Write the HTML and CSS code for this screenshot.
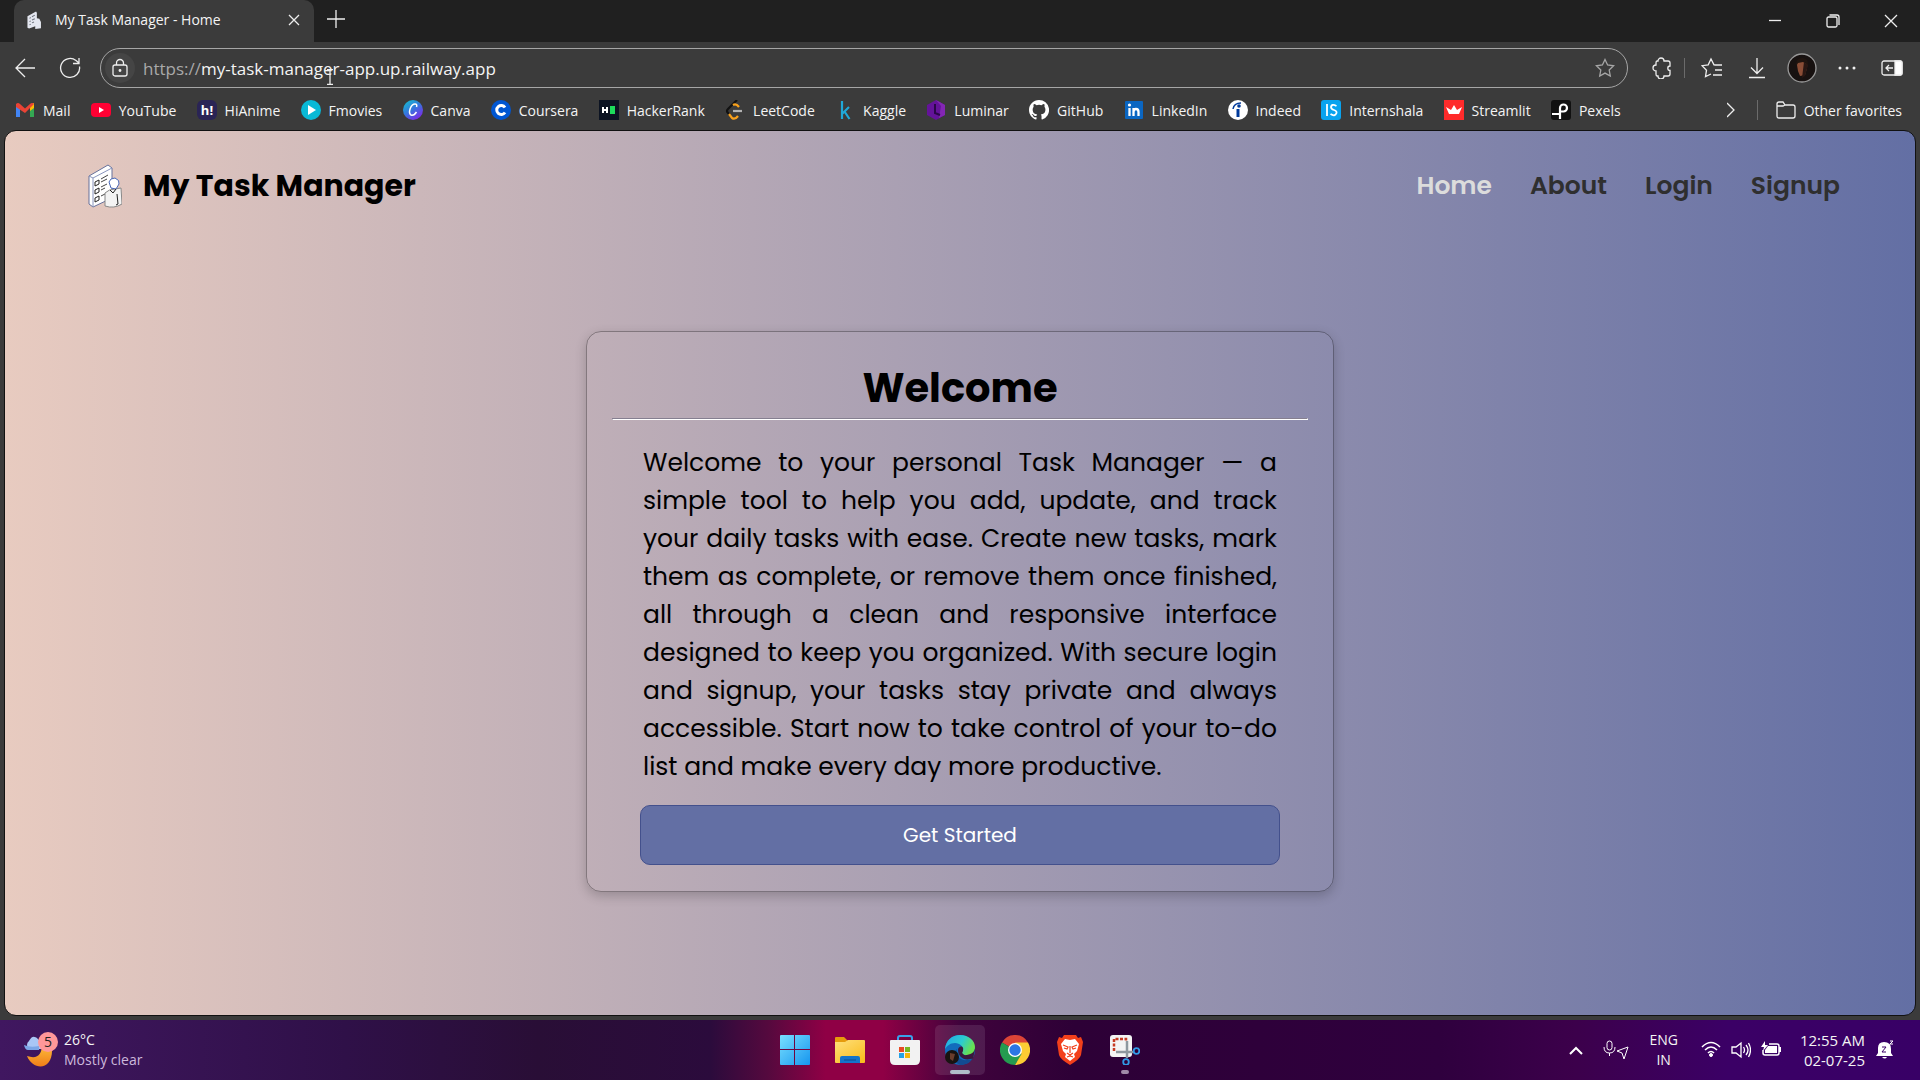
FILE: index.html
```html
<!DOCTYPE html>
<html lang="en">
<head>
<meta charset="utf-8">
<title>My Task Manager - Home</title>
<link rel="stylesheet" href="styles.css">
</head>
<body>
<div class="desktop">
<div class="browser">
  <div class="tabs">
    <div class="tab">
      <svg class="tab-icon" viewBox="0 0 34 44"><path d="M1 13 22 1l2 3v14l6 1 4 8v15l-14 2v-7L5 43l-4-2z" fill="#e4e7f0"/><path d="M6 18l3-2M6 26l3-2M6 34l3-2M12 14l7-4M12 22l7-3M12 29l5-2" stroke="#70757f" stroke-width="2.500"/></svg>
      <span class="tab-title">My Task Manager - Home</span>
      <button class="icon-btn" aria-label="Close tab"><svg width="12" height="12" viewBox="0 0 12 12"><path d="M1 1l10 10M11 1 1 11"/></svg></button>
    </div>
    <button class="icon-btn new-tab" aria-label="New tab"><svg width="18" height="18" viewBox="0 0 18 18"><path d="M9 0v18M0 9h18"/></svg></button>
    <div class="window-controls">
      <button class="icon-btn" aria-label="Minimize"><svg width="14" height="14" viewBox="0 0 14 14"><path d="M1 6.500h12"/></svg></button>
      <button class="icon-btn" aria-label="Restore"><svg width="14" height="14" viewBox="0 0 14 14"><rect x="1" y="3" width="10" height="10" rx="1.500"/><path d="M3.500 1H11q2 0 2 2v8"/></svg></button>
      <button class="icon-btn" aria-label="Close"><svg width="14" height="14" viewBox="0 0 14 14"><path d="M1 1l12 12M13 1 1 13"/></svg></button>
    </div>
  </div>
  <div class="toolbar">
    <button class="icon-btn" aria-label="Back"><svg width="20" height="20" viewBox="0 0 20 20"><path d="M20 10H1M10 1l-9 9 9 9"/></svg></button>
    <button class="icon-btn" aria-label="Refresh"><svg width="22" height="22" viewBox="0 0 22 22"><path d="M20.500 9.500A9.500 9.500 0 1 1 17 3.500L20 6M20 1v5.500h-6"/></svg></button>
    <div class="address">
      <span class="lock"><svg width="18" height="20" viewBox="0 0 18 20"><rect x="2" y="7" width="14" height="11" rx="2"/><path d="M5.500 7V5a3.500 3.500 0 0 1 7 0v2"/><circle cx="9" cy="12.500" r="0.800" fill="#eee"/></svg></span>
      <span class="url"><span class="scheme">https://</span>my-task-manager-app.up.railway.app</span>
      <svg class="cursor" width="8" height="16" viewBox="0 0 8 16"><path d="M1 .5h6M4 1v14M1 15.500h6"/></svg>
      <button class="star" aria-label="Add to favorites"><svg width="20" height="20" viewBox="0 0 20 20"><path d="M10 1.500l2.600 5.500 6 .8-4.400 4.200 1.100 6L10 15.100 4.700 18l1.100-6L1.400 7.800l6-.8z"/></svg></button>
    </div>
    <button class="icon-btn" aria-label="Extensions"><svg width="20" height="22" viewBox="0 0 20 22"><path d="M6 4a3 3 0 0 1 6 0h4q2 0 2 2v3a2.200 2.200 0 0 0 0 4.400V17q0 2-2 2h-4a3 3 0 0 1-6 0H5q-1 0-1-2v-3a3 3 0 0 1 0-6V6q0-2 1-2z"/></svg></button>
    <span class="divider"></span>
    <button class="icon-btn" aria-label="Favorites"><svg width="22" height="22" viewBox="0 0 22 22"><path d="M14 8l-1-.2L10 2 7.200 7.800 1 8.700l4.500 4.500-1 6.500L10 17M14 8h7M14 13h7M12 18h9"/></svg></button>
    <button class="icon-btn" aria-label="Downloads"><svg width="18" height="22" viewBox="0 0 18 22"><path d="M9 1v15M3 10.500l6 6 6-6M1 20.500h16"/></svg></button>
    <button class="icon-btn" aria-label="Profile"><svg width="30" height="30" viewBox="0 0 30 30"><circle cx="15" cy="15" r="14" fill="#171110" stroke="#999"/><path d="M10 12q0-5 6-5 5 0 4 8l-2 7-5 1-2-5z" fill="#8a4d36" stroke="none"/><path d="M9 13q0-9 7-8 6 1 5 7l-5-3-5 1z" fill="#201510" stroke="none"/><path d="M17 9l4 3-3 11-3 2z" fill="#291713" stroke="none"/></svg></button>
    <button class="icon-btn" aria-label="Settings and more"><svg width="18" height="4" viewBox="0 0 18 4"><g fill="#f1f1f1" stroke="none"><circle cx="2" cy="2" r="1.500"/><circle cx="9" cy="2" r="1.500"/><circle cx="16" cy="2" r="1.500"/></g></svg></button>
    <button class="icon-btn" aria-label="Sidebar"><svg width="22" height="16" viewBox="0 0 22 16"><rect x="1" y="1" width="20" height="14" rx="2"/><path d="M14 1h5q2 0 2 2v10q0 2-2 2h-5z" fill="#fff"/><path d="M12 8H5M8 5 5 8l3 3"/></svg></button>
  </div>
  <nav class="bookmarks" aria-label="Favorites">
    <div class="bookmark-list">
      <a href="#"><svg viewBox="0 0 20 20"><path d="M1 5v12h4V8z" fill="#4285f4"/><path d="M19 5v12h-4V8z" fill="#34a853"/><path d="M15 4.500l4-1.500v5l-4 3z" fill="#fbbc04"/><path d="M1 4q2-2 4 0l5 4.500L15 4q2-2 4 0l-9 9-9-6z" fill="#ea4335"/></svg>Mail</a>
      <a href="#"><svg viewBox="0 0 20 20"><rect y="3" width="20" height="14" rx="4" fill="#ff0033"/><path d="M8 7l5 3-5 3z" fill="#fff"/></svg>YouTube</a>
      <a href="#"><svg viewBox="0 0 20 20"><rect width="20" height="20" rx="6" fill="#2a2455"/><text x="10" y="15" font-size="13" font-weight="700" text-anchor="middle" fill="#fff">h!</text></svg>HiAnime</a>
      <a href="#"><svg viewBox="0 0 20 20"><circle cx="10" cy="10" r="10" fill="#09b9d6"/><path d="M7 5l8 5-8 5z" fill="#fff"/></svg>Fmovies</a>
      <a href="#"><svg viewBox="0 0 20 20"><defs><linearGradient id="canva" x2=".7" y2="1"><stop stop-color="#12c8cf"/><stop offset=".5" stop-color="#327bdc"/><stop offset="1" stop-color="#7d2ae8"/></linearGradient></defs><circle cx="10" cy="10" r="10" fill="url(#canva)"/><path d="M13.500 7q1-3-1.500-3-3 0-4.800 4.500-1.700 5 .8 6.500 3 1 5.500-3" fill="none" stroke="#fff" stroke-width="1.500"/></svg>Canva</a>
      <a href="#"><svg viewBox="0 0 20 20"><circle cx="10" cy="10" r="10" fill="#0056d2"/><path d="M14 7.500a4.500 4.500 0 1 0 0 5" fill="none" stroke="#fff" stroke-width="3"/></svg>Coursera</a>
      <a href="#"><svg viewBox="0 0 20 20"><path d="M0 0h20v20H0z" fill="#0c1322"/><path d="M4 7v6M8 7v6M4 10h4" stroke="#fff" stroke-width="2"/><path d="M11 6h5v8h-5z" fill="#1ddb5b"/></svg>HackerRank</a>
      <a href="#"><svg viewBox="0 0 20 20" fill="none" stroke-width="2.200"><path d="M12 0 3 9q-2 2 0 4l2 2" stroke="#111"/><path d="M8 5q3-2 6 2M4 14l3 4q3 2 6-2" stroke="#f9a11b"/><path d="M8 11h9" stroke="#b3b3b3"/></svg>LeetCode</a>
      <a href="#"><svg viewBox="0 0 20 20" fill="none" stroke="#20a8d8" stroke-width="2.200"><path d="M7 1v18M14 7l-7 7M9.500 11.500l5 7.500"/></svg>Kaggle</a>
      <a href="#"><svg viewBox="0 0 20 20"><path d="M10 0l9 5v10l-9 5-9-5V5z" fill="#64139a"/><path d="M10 0l9 5v10l-6 3 2-12z" fill="#8326b4"/><path d="M9 4v9l5 2" fill="none" stroke="#2b0749" stroke-width="2"/></svg>Luminar</a>
      <a href="#"><svg viewBox="0 0 16 16" fill="#fff"><path d="M8 0C3.580 0 0 3.580 0 8c0 3.540 2.290 6.530 5.470 7.590.4.070.55-.17.55-.38v-1.490c-2.010.37-2.530-.49-2.690-.94-.09-.23-.48-.94-.82-1.130-.28-.15-.68-.52-.01-.53.63-.01 1.080.58 1.230.82.72 1.210 1.870.87 2.330.66.07-.52.280-.87.510-1.070-1.780-.2-3.640-.89-3.640-3.950 0-.87.310-1.590.82-2.150-.08-.2-.36-1.020.08-2.120 0 0 .67-.21 2.200.82a7.600 7.600 0 0 1 4 0c1.530-1.040 2.200-.82 2.200-.82.440 1.100.16 1.920.08 2.120.51.56.82 1.270.82 2.150 0 3.070-1.870 3.750-3.650 3.950.29.25.54.73.54 1.480v2.200c0 .21.15.46.55.38A8 8 0 0 0 8 0z"/></svg>GitHub</a>
      <a href="#"><svg viewBox="0 0 20 20"><rect x="1" y="1" width="18" height="18" rx="1" fill="#0a66c2"/><path d="M5.500 8v8M9.500 8v8M9.500 12q0-3 2.500-3t2.500 3v4" fill="none" stroke="#fff" stroke-width="2.300"/><circle cx="5.500" cy="5" r="1.600" fill="#fff"/></svg>LinkedIn</a>
      <a href="#"><svg viewBox="0 0 20 20"><circle cx="10" cy="10" r="10" fill="#fff"/><path d="M10 9v8" stroke="#003a9b" stroke-width="3"/><circle cx="11" cy="6" r="1.800" fill="#003a9b"/><path d="M5 9q1-6 8-6" fill="none" stroke="#003a9b" stroke-width="1.500"/></svg>Indeed</a>
      <a href="#"><svg viewBox="0 0 20 20"><rect width="20" height="20" rx="3" fill="#09a3ef"/><path d="M6 4v12M15.500 6q-5-2.500-5.500 1 0 2 3 3t2.500 3q-1.500 4-6 1" fill="none" stroke="#fff" stroke-width="1.800"/></svg>Internshala</a>
      <a href="#"><svg viewBox="0 0 20 20"><path d="M0 0h20v20H0z" fill="#ff2b2b"/><path d="M2 7l5 3 3-5 3 5 5-3-3 7H5z" fill="#fff"/></svg>Streamlit</a>
      <a href="#"><svg viewBox="0 0 20 20"><rect width="20" height="20" rx="3" fill="#111"/><path d="M1 14h8M9 19V8a3.500 3.500 0 1 1 3.500 3.500H10" fill="none" stroke="#fff" stroke-width="2.200"/></svg>Pexels</a>
    </div>
    <button class="icon-btn more" aria-label="More favorites"><svg width="8" height="16" viewBox="0 0 8 16"><path d="M0 1l7 7-7 7"/></svg></button>
    <span class="divider"></span>
    <a href="#"><svg viewBox="0 0 20 20" fill="none" stroke="#eee" stroke-width="1.300"><path d="M1 6V4q0-2 2-2h4l2 3h8q2 0 2 2v9q0 2-2 2H3q-2 0-2-2zh6l2-1"/></svg>Other favorites</a>
  </nav>

  <div class="page">
    <header class="site-header">
      <a class="brand" href="#">
        <svg width="34" height="44" viewBox="0 0 34 44"><path d="M1 12 20 1l4 3v30L5 43l-4-3z" fill="#fff" stroke="#66719b"/><path d="M1 12l4 2 19-10M5 14v29" fill="none" stroke="#8995bd"/><path d="M7 18l4-2v4l-4 2zM7 26l4-2v4l-4 2zM7 34l4-2v4l-4 2z" fill="#fff" stroke="#222"/><path d="M13 15l7-4M13 18l6-3M13 23l6-3M13 26l4-2M13 32l4-2" stroke="#444"/><path d="M17 29q4-4 10-4l6-1 1 16q-8 5-17 2z" fill="#f3f3f3" stroke="#888"/><path d="M21 18q1-4 6-4 5 2 4 6l-3 5-5-1z" fill="#fff" stroke="#4967b5"/><path d="M22 26l3 3 3-4M29 30l1 10-2 1" fill="none" stroke="#222"/></svg>
        <span>My Task Manager</span>
      </a>
      <nav class="site-nav">
        <a class="active" href="#">Home</a>
        <a href="#">About</a>
        <a href="#">Login</a>
        <a href="#">Signup</a>
      </nav>
    </header>
    <main class="stage">
      <section class="card">
        <h1>Welcome</h1>
        <hr>
        <p>Welcome to your personal Task Manager — a simple tool to help you add, update, and track your daily tasks with ease. Create new tasks, mark them as complete, or remove them once finished, all through a clean and responsive interface designed to keep you organized. With secure login and signup, your tasks stay private and always accessible. Start now to take control of your to-do list and make every day more productive.</p>
        <button class="cta">Get Started</button>
      </section>
    </main>
  </div>
</div>

<footer class="taskbar">
  <div class="weather">
    <svg width="36" height="36" viewBox="0 0 36 36"><defs><linearGradient id="moon" x2="0" y2="1"><stop stop-color="#ffc13d"/><stop offset="1" stop-color="#ef7d18"/></linearGradient></defs><path d="M3 24q15 5 15-12l10 5c1 22-19 22-25 7z" fill="url(#moon)"/><path d="M5 17a5 5 0 0 1 0-8q4-8 10-1 6 3 3 9z" fill="#a9c6f5"/><path d="M0 13q6 3 15 1v4H4q-3 0-4-5z" fill="#7ca5e6"/><circle cx="24" cy="10" r="10" fill="#ff9799"/><text x="24" y="15" font-size="14" text-anchor="middle" fill="#222">5</text></svg>
    <div class="stack"><span>26°C</span><span class="dim">Mostly clear</span></div>
  </div>
  <div class="apps">
    <button aria-label="Start"><svg viewBox="0 0 30 30"><defs><linearGradient id="win" x2="1" y2="1"><stop stop-color="#79e0ff"/><stop offset="1" stop-color="#1695ee"/></linearGradient></defs><path d="M0 1q0-1 1-1h13v14H0zM15 0h14q1 0 1 1v13H15zM0 15h14v15H1q-1 0-1-1zM15 15h15v14q0 1-1 1H15z" fill="url(#win)"/></svg></button>
    <button aria-label="File Explorer"><svg viewBox="0 0 30 30"><defs><linearGradient id="folder" x2=".8" y2="1"><stop stop-color="#ffe07b"/><stop offset="1" stop-color="#f9bd20"/></linearGradient></defs><path d="M0 3q0-1 1-1h8l4 4v6H0z" fill="#e69b0c"/><path d="M0 7h10l3-2h16q1 0 1 1v21q0 1-1 1H1q-1 0-1-1z" fill="url(#folder)"/><path d="M5 28v-5q0-2 2-2h16q2 0 2 2v5z" fill="#1474ca"/><path d="M9 25h12" stroke="#0c4b8f"/></svg></button>
    <button aria-label="Microsoft Store"><svg viewBox="0 0 30 30"><path d="M8 8V3q0-2 2-2h10q2 0 2 2v5" fill="none" stroke="#39a1eb" stroke-width="2"/><path d="M0 6q0-1 1-1h28q1 0 1 1v19q0 5-5 5H5q-5 0-5-5z" fill="#f2f2f2"/><path d="M9 12h5v5H9z" fill="#e84b25"/><path d="M15 12h5v5h-5z" fill="#78b921"/><path d="M9 18h5v5H9z" fill="#25a2e6"/><path d="M15 18h5v5h-5z" fill="#f6b60b"/></svg></button>
    <button class="current" aria-label="Microsoft Edge"><svg viewBox="0 0 30 30"><defs><linearGradient id="edge" x2="1" y2=".4"><stop stop-color="#21a7e8"/><stop offset=".6" stop-color="#2ccbd0"/><stop offset="1" stop-color="#68e052"/></linearGradient></defs><circle cx="15" cy="15" r="15" fill="#126cbc"/><path d="M15 15l15-1-2 10-6-2z" fill="#3a183d"/><path d="M0 14C1 5 7 0 15 0c9 0 15 6 15 12 0 6-5 8-10 8-3 0-4-2-2-4 1-4-3-8-8-8-5 0-8 3-10 6z" fill="url(#edge)"/><path d="M12 14c-2 7 4 12 10 11 3 0 5-1 6-2-3 5-7 7-13 7-7-2-8-13-3-16z" fill="#124b91"/><path d="M13 15c0-3 4-5 5-2 1 2-2 4 0 6 4 3 8 2 10 1l0 3c-8 4-15-1-15-8z" fill="#3a183d"/><circle cx="7" cy="22" r="7" fill="#181311"/><path d="M5 18l5 1-2 7-3-2z" fill="#693d2c"/></svg></button>
    <button aria-label="Google Chrome"><svg viewBox="0 0 30 30"><path d="M15 15 2 7.500A15 15 0 0 1 28 7.500z" fill="#db4437"/><path d="M15 15 2 7.500A15 15 0 0 0 15 30l7-11z" fill="#249b50"/><path d="M28 7.500A15 15 0 0 1 15 30l6.500-11-6.500-11.500z" fill="#fccc33"/><circle cx="15" cy="15" r="7" fill="#fff"/><circle cx="15" cy="15" r="5.700" fill="#2b76e5"/></svg></button>
    <button aria-label="Brave"><svg viewBox="0 0 30 30"><path d="M9 0h12l2 3 3-1 2 5-2 13q-1 4-11 10Q5 24 4 20L2 7l2-5 3 1z" fill="#f2401b"/><path d="M10 4l5 1 5-1 4 5-2 7-3 3 1 3-5 4-5-4 1-3-3-3-2-7z" fill="#fff"/><path d="M8 10l5 2-1 2-3-1M22 10l-5 2 1 2 3-1M15 11v7M12 18l3 2 3-2M12 22l3-1 3 1" fill="none" stroke="#f2401b" stroke-width="1.200"/></svg></button>
    <button class="open" aria-label="Snipping Tool"><svg viewBox="0 0 30 30"><rect width="22" height="22" rx="3" fill="#f4f4f4"/><path d="M4 16V4h12v3" fill="none" stroke="#c63b23" stroke-width="2.500" stroke-dasharray="3 1.500"/><path d="M17 6v17M6 17h18" stroke="#8e989f" stroke-width="2.500"/><g fill="none" stroke="#319be7" stroke-width="1.800"><circle cx="26.500" cy="16" r="2.800"/><circle cx="16" cy="27" r="2.800"/></g></svg></button>
  </div>
  <div class="tray">
    <svg class="up" width="14" height="9" viewBox="0 0 14 9"><path d="M1 8l6-6 6 6" stroke-width="2"/></svg>
    <svg class="mic" width="26" height="20" viewBox="0 0 26 20"><rect x="4" y="1" width="5" height="9" rx="2.500"/><path d="M1 7q0 6 5.500 6T12 7M6.500 13v3M25 7l-11 4 5 2 2 6z"/></svg>
    <div class="stack lang"><span>ENG</span><span>IN</span></div>
    <div class="status">
      <svg width="20" height="16" viewBox="0 0 20 16"><path d="M1 6q9-9 18 0M4 9q6-6 12 0M7 12q3-3 6 0" stroke-width="1.600"/><circle cx="10" cy="14" r="1.500" fill="#fff"/></svg>
      <svg width="20" height="18" viewBox="0 0 20 18"><path d="M1 6h4l5-4v14l-5-4H1zM12.500 6q2 3 0 6M15 4q4 5 0 10M17.500 2q4 7 0 14" stroke-width="1.300"/></svg>
      <svg width="20" height="16" viewBox="0 0 20 16"><path d="M8 3h8q2 0 2 2v7q0 2-2 2H4q-2 0-2-2V9" stroke-width="1.500"/><path d="M7 5h9v7H4V9zM4 0 0 6h3L2 10l5-6H4zM18 6h2v5h-2z" fill="#fff" stroke="none"/></svg>
    </div>
    <div class="stack clock"><span>12:55 AM</span><span>02-07-25</span></div>
    <svg class="bell" width="18" height="20" viewBox="0 0 18 20"><path d="M0 16l2-3V8q0-6 6-6 7 0 7 7v4l2 3zM6 17h5q-2 3-5 0z" fill="#fff" stroke="none"/><path d="M6 7h4l-4 5h4" stroke="#3b0068"/><path d="M11 5h3l-3 4h3M14 1h3l-3 3h3"/></svg>
  </div>
</footer>
</div>
</body>
</html>
```
FILE: styles.css
```css
* { box-sizing: border-box; }

body {
  margin: 0;
  font-family: "Segoe UI", "Open Sans", "Noto Sans", sans-serif;
  font-size: 14px;
  color: #f4f4f4;
}

a { color: inherit; text-decoration: none; }

button {
  margin: 0;
  padding: 0;
  border: 0;
  background: none;
  color: inherit;
  font: inherit;
}

svg { display: block; flex: none; }

.desktop {
  display: flex;
  flex-direction: column;
  min-height: 100vh;
}

/* Browser window */
.browser {
  flex: 1;
  display: flex;
  flex-direction: column;
  background: #3b3b3b;
}

.icon-btn {
  display: grid;
  place-items: center;
  flex: none;
}

.icon-btn svg,
.lock svg,
.star svg,
.cursor {
  fill: none;
  stroke: #eee;
  stroke-width: 1.3;
}

.tabs {
  display: flex;
  align-items: center;
  height: 42px;
  padding-left: 14px;
  background: #202020;
}

.tab {
  display: flex;
  align-items: center;
  gap: 13px;
  width: 300px;
  height: 42px;
  padding: 0 14px 3px 12px;
  border-radius: 10px 10px 0 0;
  background: #3b3b3b;
}

.tab-icon { width: 16px; height: 18px; }
.tab-title { flex: 1; }
.new-tab { width: 44px; padding-bottom: 4px; }

.window-controls {
  display: flex;
  gap: 44px;
  margin-left: auto;
  padding-right: 22px;
}

.toolbar {
  display: flex;
  align-items: center;
  padding: 6px 6px 4px 2px;
}

.toolbar .icon-btn { width: 45px; }
.toolbar .divider { margin-right: 4px; }

.address {
  position: relative;
  flex: 1;
  display: flex;
  align-items: center;
  height: 40px;
  margin: 0 11px 0 8px;
  padding: 0 12px 0 4px;
  border: 1px solid #a6a6a6;
  border-radius: 20px;
}

.lock {
  display: grid;
  place-items: center;
  width: 30px;
  height: 30px;
  border-radius: 50%;
  background: #454545;
}

.url { margin-left: 8px; font-size: 17px; }
.scheme { color: #a9a9a9; }
.cursor { position: absolute; left: 225px; top: 20px; }
.star { margin-left: auto; }
.star svg { stroke: #a6a6a6; }

.divider { width: 1px; height: 20px; background: #6b6b6b; }

.bookmarks {
  display: flex;
  align-items: center;
  height: 38px;
  padding: 0 18px 2px 15px;
}

.bookmarks a {
  display: flex;
  align-items: center;
  gap: 8px;
  white-space: nowrap;
}

.bookmarks a svg { width: 20px; height: 20px; }

.bookmark-list {
  flex: 1;
  display: flex;
  justify-content: space-between;
}

.bookmarks .more { margin: 0 22px 0 106px; }
.bookmarks .divider { margin-right: 18px; }

/* Web page */
.page {
  flex: 1;
  display: flex;
  flex-direction: column;
  margin: 0 4px 4px;
  border: 1px solid #111;
  border-radius: 12px;
  background: linear-gradient(to right, #e8cbc0, #636fa4);
  color: #000;
  font-family: "Poppins", "Inter", sans-serif;
}

.site-header {
  display: flex;
  align-items: center;
  justify-content: space-between;
  padding: 33px 75px 0 83px;
}

.brand {
  display: flex;
  align-items: center;
  gap: 21px;
  font-size: 30px;
  font-weight: 700;
  line-height: 44px;
}

.site-nav {
  display: flex;
  gap: 38px;
  color: #2f2f2f;
  font-size: 25px;
  font-weight: 600;
}

.site-nav .active { color: #dcdcdc; }

.stage {
  flex: 1;
  display: grid;
  place-items: center;
}

.card {
  width: 748px;
  padding: 26px 25px;
  border: 1px solid #00000050;
  border-radius: 15px;
  box-shadow: 0 4px 12px #00000033;
}

.card h1 {
  margin: 0;
  font-size: 40px;
  line-height: 60px;
  text-align: center;
}

.card hr {
  margin: 0 0 24px;
  border: 1px solid;
  border-color: #857f90 #fff #fff #857f90;
}

.card p {
  margin: 0 31px;
  font-size: 25px;
  line-height: 38px;
  text-align: justify;
}

.cta {
  display: block;
  width: 640px;
  height: 60px;
  margin: 19px auto 0;
  border: 1px solid #43508c;
  border-radius: 10px;
  background: #636fa4;
  color: #fff;
  font-size: 20px;
}

/* Taskbar */
.taskbar {
  display: grid;
  grid-template-columns: 1fr auto 1fr;
  align-items: center;
  height: 60px;
  padding: 0 24px;
  background: linear-gradient(to right, #401760 0%, #2f1048 18%, #290e36 28%, #2b0b3c 37%, #55093e 40%, #8f0045 43%, #8f0045 46%, #40033c 50%, #2d0036 56%, #2f003e 75%, #3c004b 82%, #3b0066 90%, #380066 100%);
}

.weather { display: flex; align-items: center; gap: 4px; }
.stack { display: flex; flex-direction: column; line-height: 20px; }
.dim { color: #cdb9dc; }

.apps { display: flex; gap: 5px; }

.apps button {
  position: relative;
  display: grid;
  place-items: center;
  width: 50px;
  height: 50px;
  border-radius: 5px;
}

.apps svg { width: 30px; height: 30px; }
.apps .current { background: #ffffff1a; }

.apps .current::after,
.apps .open::after {
  content: "";
  position: absolute;
  bottom: 1px;
  width: 20px;
  height: 4px;
  border-radius: 2px;
  background: #b0bcc9;
}

.apps .open::after { width: 8px; background: #a08aa8; }

.tray {
  display: flex;
  align-items: center;
  justify-content: flex-end;
  padding-right: 2px;
}

.tray svg { fill: none; stroke: #fff; }
.mic { margin: 0 20px; }
.lang { align-items: center; margin-right: 23px; }
.status { display: flex; gap: 10px; margin-right: 19px; }
.clock { align-items: flex-end; margin-right: 11px; font-size: 15px; }
```
